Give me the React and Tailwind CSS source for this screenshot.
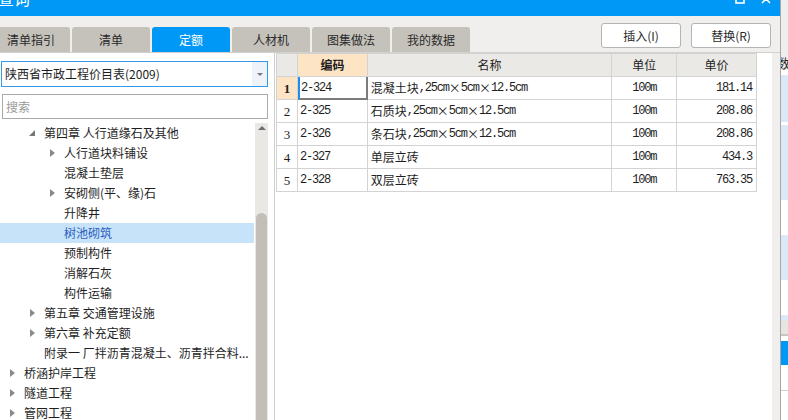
import React from 'react'

const ui = { fontFamily: '"Noto Sans CJK SC", "Noto Sans", sans-serif' }
const cjk = { fontFamily: '"Noto Sans CJK SC", sans-serif' }
const mono = { fontFamily: '"Liberation Mono", monospace' }

const tabs = ['清单指引', '清单', '定额', '人材机', '图集做法', '我的数据']

const tree = [
  { lv: 1, t: '第四章 人行道缘石及其他', a: 'open' },
  { lv: 2, t: '人行道块料铺设', a: 'closed' },
  { lv: 2, t: '混凝土垫层' },
  { lv: 2, t: '安砌侧(平、缘)石', a: 'closed' },
  { lv: 2, t: '升降井' },
  { lv: 2, t: '树池砌筑', sel: true },
  { lv: 2, t: '预制构件' },
  { lv: 2, t: '消解石灰' },
  { lv: 2, t: '构件运输' },
  { lv: 1, t: '第五章 交通管理设施', a: 'closed' },
  { lv: 1, t: '第六章 补充定额', a: 'closed' },
  { lv: 1, t: '附录一 厂拌沥青混凝土、沥青拌合料...' },
  { lv: 0, t: '桥涵护岸工程', a: 'closed' },
  { lv: 0, t: '隧道工程', a: 'closed' },
  { lv: 0, t: '管网工程', a: 'closed' },
]

const indent = ['pl-[8px]', 'pl-[28px]', 'pl-[48px]']

const rows = [
  { code: '2-324', name: '混凝土块,25cm×5cm×12.5cm', unit: '100m', price: '181.14' },
  { code: '2-325', name: '石质块,25cm×5cm×12.5cm', unit: '100m', price: '208.86' },
  { code: '2-326', name: '条石块,25cm×5cm×12.5cm', unit: '100m', price: '208.86' },
  { code: '2-327', name: '单层立砖', unit: '100m', price: '434.3' },
  { code: '2-328', name: '双层立砖', unit: '100m', price: '763.35' },
]

// ascii runs in a narrow mono, the rest in the CJK face
function Mixed({ text }) {
  const parts = text.match(/[\x20-\x7e]+|[^\x20-\x7e]+/g) || []
  return parts.map((p, i) =>
    /^[\x20-\x7e]/.test(p)
      ? <span key={i} style={mono} className="tracking-[-1.2px]">{p}</span>
      : <span key={i} style={cjk}>{p}</span>
  )
}

function Arrow({ a }) {
  if (a === 'closed') {
    return (
      <svg width="5" height="8" viewBox="0 0 5 8" className="ml-[2px]"><polygon points="0,0 5,4 0,8" fill="#8a8a8a" /></svg>
    )
  }
  if (a === 'open') {
    return (
      <svg width="6" height="6" viewBox="0 0 6 6" className="ml-[1px]"><polygon points="6,0 6,6 0,6" fill="#777" /></svg>
    )
  }
  return null
}

export default function App() {
  return (
    <div className="w-[788px] h-[420px] overflow-hidden flex bg-[#f0efed] text-[#1e1e1e]" style={ui}>
      <div className="w-[781px] h-full flex flex-col border-r border-[#a6a6a6]">
        {/* title bar */}
        <div className="h-[16px] shrink-0 bg-[#0098f6] flex items-start overflow-hidden text-white">
          <span className="text-[16px] leading-[20px] mt-[-12px] ml-[-2px]">查询</span>
          <svg width="10" height="10" viewBox="0 0 10 10" className="ml-auto mt-[-6px]"><rect x="1" y="1" width="8" height="8" fill="none" stroke="#fff" strokeWidth="1.6" /></svg>
          <svg width="10" height="10" viewBox="0 0 10 10" className="ml-[16px] mr-[9px] mt-[-6px]"><path d="M1 1L9 9M9 1L1 9" stroke="#fff" strokeWidth="1.6" /></svg>
        </div>

        {/* tabs + buttons */}
        <div className="h-[37px] shrink-0 flex border-b border-[#d2d0cb]">
          <div className="flex items-end gap-[2px] ml-[-8px]">
            {tabs.map(t => (
              <div
                key={t}
                className={`w-[78px] h-[25px] rounded-t-[3px] flex items-center justify-center text-[12px] leading-none ${t === '定额' ? 'bg-[#0098f6] text-white' : 'bg-[#c5c2bb] text-[#2a2a2a]'}`}
              >
                {t}
              </div>
            ))}
          </div>
          <div className="ml-auto mr-[9px] mt-[7px] flex gap-[10px]">
            <button className="w-[80px] h-[25px] bg-white border border-[#b4b4b4] rounded-[3px] text-[12px] leading-none text-[#2a2a2a]">插入(I)</button>
            <button className="w-[80px] h-[25px] bg-white border border-[#b4b4b4] rounded-[3px] text-[12px] leading-none text-[#2a2a2a]">替换(R)</button>
          </div>
        </div>

        {/* body */}
        <div className="flex-1 flex min-h-0">
          {/* left panel */}
          <div className="w-[274px] bg-white flex flex-col pt-[8px]">
            <div className="ml-[1px] w-[267px] h-[26px] border border-[#3399e8] flex items-center">
              <span className="pl-[3px] text-[12px] leading-none flex-1">陕西省市政工程价目表(2009)</span>
              <div className="w-[15px] h-full bg-[#eef3fa] flex items-center justify-center">
                <svg width="6" height="3" viewBox="0 0 6 3"><polygon points="0,0 6,0 3,3" fill="#777" /></svg>
              </div>
            </div>
            <div className="ml-[2px] mt-[7px] w-[266px] h-[25px] border border-[#aaaaaa] flex items-center">
              <span className="pl-[3px] text-[12px] leading-none text-[#9a9a9a]">搜索</span>
            </div>
            <div className="mt-[4px] flex flex-1 min-h-0">
              <div className="w-[254px] flex flex-col">
                {tree.map(n => (
                  <div key={n.t} className={`h-[20px] shrink-0 flex items-center ${indent[n.lv]} ${n.sel ? 'bg-[#c6e3fa] text-[#2b5fc0]' : ''}`}>
                    <div className="w-[16px] flex items-center"><Arrow a={n.a} /></div>
                    <span className="text-[12px] leading-none whitespace-nowrap">{n.t}</span>
                  </div>
                ))}
              </div>
              <div className="ml-[1px] w-[13px] bg-[#e9e8e4] flex flex-col items-center">
                <svg width="8" height="4" viewBox="0 0 8 4" className="mt-[3px]"><polygon points="0,4 8,4 4,0" fill="#6e6e6e" /></svg>
                <div className="mt-[83px] w-[11px] flex-1 bg-[#c3bfb8] rounded-t-[6px]" />
              </div>
            </div>
          </div>

          {/* grid */}
          <div className="flex-1 bg-white border-l border-[#cfcfcf] pl-[1px]">
            <div className="w-[481px] border-l border-t border-[#d3d3d3] text-[12px]">
              <div className="flex h-[23px]">
                <div className="w-[21px] bg-[#ebe9e5] border-r border-b border-[#d3d3d3]" />
                <div className="w-[70px] bg-[#fde4c4] border-r border-b border-[#d3d3d3] flex items-center justify-center font-bold leading-none">编码</div>
                <div className="w-[245px] bg-[#ebe9e5] border-r border-b border-[#d3d3d3] flex items-center justify-center leading-none">名称</div>
                <div className="w-[65px] bg-[#ebe9e5] border-r border-b border-[#d3d3d3] flex items-center justify-center leading-none">单位</div>
                <div className="w-[80px] bg-[#ebe9e5] border-r border-b border-[#d3d3d3] flex items-center justify-center leading-none">单价</div>
              </div>
              {rows.map((r, i) => (
                <div key={r.code} className="flex h-[23px]">
                  <div
                    className={`w-[21px] border-r border-b border-[#d3d3d3] flex items-center justify-center text-[13px] leading-none ${i === 0 ? 'bg-[#fde4c4] font-bold' : 'bg-white'}`}
                    style={{ fontFamily: '"Liberation Serif", serif' }}
                  >
                    {i + 1}
                  </div>
                  {i === 0 ? (
                    <div className="w-[70px] border-l-2 border-l-[#1e8ef0] border-r-2 border-b-2 border-r-[#7c7c7c] border-b-[#7c7c7c] flex items-center pl-[1px] leading-none">
                      <Mixed text={r.code} />
                    </div>
                  ) : (
                    <div className="w-[70px] border-r border-b border-[#d3d3d3] flex items-center pl-[2px] leading-none">
                      <Mixed text={r.code} />
                    </div>
                  )}
                  <div className="w-[245px] border-r border-b border-[#d3d3d3] flex items-center pl-[3px] leading-none whitespace-nowrap">
                    <Mixed text={r.name} />
                  </div>
                  <div className="w-[65px] border-r border-b border-[#d3d3d3] flex items-center justify-center leading-none">
                    <Mixed text={r.unit} />
                  </div>
                  <div className="w-[80px] border-r border-b border-[#d3d3d3] flex items-center justify-end pr-[4px] leading-none">
                    <Mixed text={r.price} />
                  </div>
                </div>
              ))}
            </div>
          </div>
          <div className="w-[8px] bg-[#f0efed]" />
        </div>
      </div>

      {/* edge of the window behind */}
      <div className="flex-1 flex flex-col bg-[#efeeec] overflow-hidden">
        <div className="h-[56px] shrink-0" />
        <div className="h-[14px] shrink-0 text-[13px] leading-none overflow-hidden" style={cjk}><span className="ml-[-4px]">数</span></div>
        <div className="h-[5px] shrink-0 bg-white" />
        <div className="h-[47px] shrink-0 bg-[#dbe8f8]" />
        <div className="h-[3px] shrink-0 bg-white" />
        <div className="h-[75px] shrink-0 bg-[#dbe8f8]" />
        <div className="h-[35px] shrink-0 bg-white" />
        <div className="h-[45px] shrink-0 bg-[#dbe8f8]" />
        <div className="h-[35px] shrink-0 bg-white" />
        <div className="h-[5px] shrink-0 bg-[#dbe8f8]" />
        <div className="h-[16px] shrink-0 bg-[#e6e5e2] border-b-2 border-[#c9c6c0]" />
        <div className="h-[5px] shrink-0 bg-white" />
        <div className="h-[24px] shrink-0 bg-[#0098f6]" />
        <div className="h-[26px] shrink-0 bg-white border-b border-[#cfcfcf]" />
        <div className="flex-1 bg-white" />
      </div>
    </div>
  )
}
